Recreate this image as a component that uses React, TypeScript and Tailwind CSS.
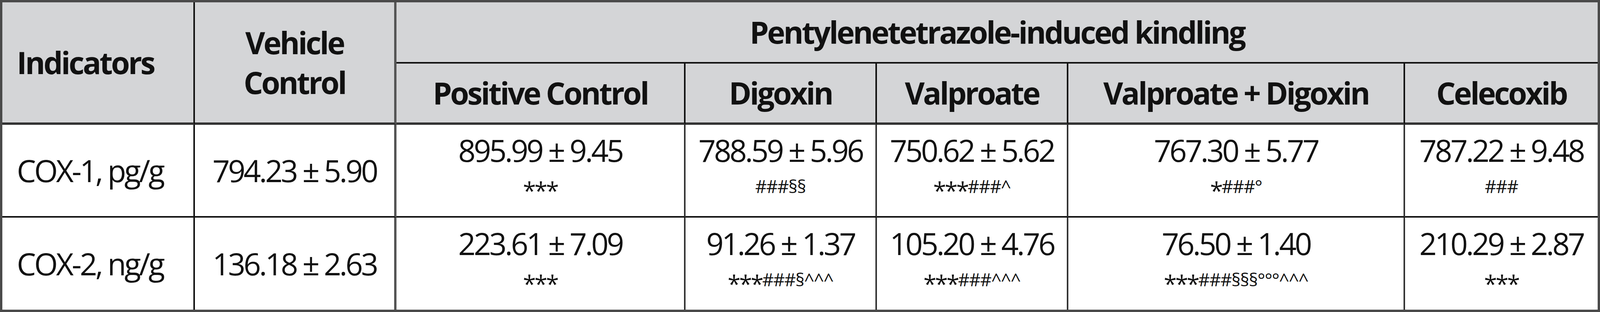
const rows = [
  {
    label: 'COX-1, pg/g',
    vehicle: '794.23 ± 5.90',
    cells: [
      { v: '895.99 ± 9.45', s: '***' },
      { v: '788.59 ± 5.96', s: '###§§' },
      { v: '750.62 ± 5.62', s: '***###^' },
      { v: '767.30 ± 5.77', s: '*###°' },
      { v: '787.22 ± 9.48', s: '###' },
    ],
  },
  {
    label: 'COX-2, ng/g',
    vehicle: '136.18 ± 2.63',
    cells: [
      { v: '223.61 ± 7.09', s: '***' },
      { v: '91.26 ± 1.37', s: '***###§^^^' },
      { v: '105.20 ± 4.76', s: '***###^^^' },
      { v: '76.50 ± 1.40', s: '***###§§§°°°^^^' },
      { v: '210.29 ± 2.87', s: '***' },
    ],
  },
];

const groups = ['Positive Control', 'Digoxin', 'Valproate', 'Valproate + Digoxin', 'Celecoxib'];

// asterisks sit high in Open Sans, so they get a bigger size and are pulled down to the # line
const Marks = ({ text }: { text: string }) => {
  const parts = text.match(/\*+|[^*]+/g) ?? [];
  return (
    <>
      {parts.map((p, i) =>
        p.startsWith('*') ? (
          <span key={i} className="text-[60px] leading-[0] align-[-16px] tracking-[-0.06em]">
            {p}
          </span>
        ) : (
          <span key={i}>{p}</span>
        )
      )}
    </>
  );
};

const head = 'bg-[#d4d5d7] flex items-center text-[78px] font-bold tracking-[-0.055em]';

export default function App() {
  return (
    <div className="w-full h-[800px] bg-white font-['Open_Sans',sans-serif] text-[#111] border-[6px] border-[#4a4a4a] grid grid-cols-[minmax(0,529fr)_minmax(0,554fr)_minmax(0,794fr)_minmax(0,526fr)_minmax(0,526fr)_minmax(0,925fr)_minmax(0,529fr)] grid-rows-[157px_157px_238px_236px]">
      <div className={`${head} row-span-2 pl-[37px] border-r-4 border-r-[#111] border-b-[6px] border-b-[#333]`}>
        Indicators
      </div>
      <div
        className={`${head} row-span-2 justify-center text-center leading-[102px] border-r-[6px] border-r-[#555] border-b-[6px] border-b-[#333]`}
      >
        Vehicle
        <br />
        Control
      </div>
      <div className={`${head} col-span-5 justify-center border-b-4 border-b-[#111]`}>
        Pentylenetetrazole-induced kindling
      </div>
      {groups.map((g, i) => (
        <div
          key={g}
          className={`${head} justify-center whitespace-nowrap border-b-[6px] border-b-[#333] ${
            i < groups.length - 1 ? 'border-r-4 border-r-[#111]' : ''
          }`}
        >
          {g}
        </div>
      ))}

      {rows.map((r, ri) => {
        const bottom = ri === 0 ? 'border-b-4 border-b-[#111]' : '';
        return [
          <div
            key={r.label}
            className={`flex items-center pl-[37px] text-[78px] leading-[97px] tracking-[-0.06em] whitespace-nowrap border-r-4 border-r-[#111] ${bottom}`}
          >
            {r.label}
          </div>,
          <div
            key={r.label + '-v'}
            className={`flex items-center justify-center text-[78px] leading-[97px] tracking-[-0.062em] whitespace-nowrap border-r-[6px] border-r-[#555] ${bottom}`}
          >
            {r.vehicle}
          </div>,
          ...r.cells.map((c, ci) => (
            <div
              key={r.label + ci}
              className={`flex items-center justify-center text-center ${
                ci < r.cells.length - 1 ? 'border-r-4 border-r-[#333]' : ''
              } ${bottom}`}
            >
              <div className="mb-[38px]">
                <div className="text-[78px] leading-[97px] tracking-[-0.062em] whitespace-nowrap">{c.v}</div>
                <div className="mt-[20px] text-[46px] leading-[46px] tracking-[-0.03em] whitespace-nowrap">
                  <Marks text={c.s} />
                </div>
              </div>
            </div>
          )),
        ];
      })}
    </div>
  );
}
